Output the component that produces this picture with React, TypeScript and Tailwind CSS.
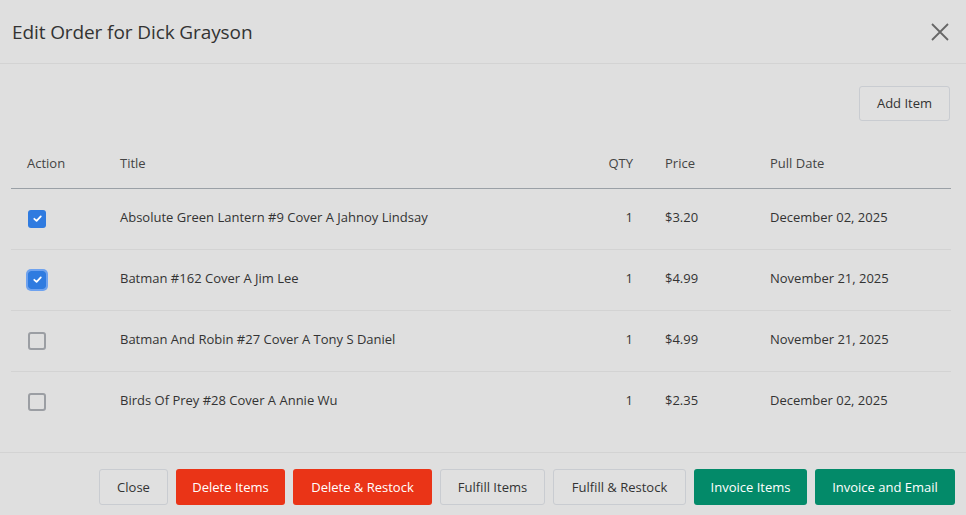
import React, { useState } from 'react';

const items = [
  { title: 'Absolute Green Lantern #9 Cover A Jahnoy Lindsay', qty: 1, price: '$3.20', date: 'December 02, 2025', checked: true },
  { title: 'Batman #162 Cover A Jim Lee', qty: 1, price: '$4.99', date: 'November 21, 2025', checked: true, focus: true },
  { title: 'Batman And Robin #27 Cover A Tony S Daniel', qty: 1, price: '$4.99', date: 'November 21, 2025', checked: false },
  { title: 'Birds Of Prey #28 Cover A Annie Wu', qty: 1, price: '$2.35', date: 'December 02, 2025', checked: false },
];

function Check({ checked, focus }: { checked: boolean; focus?: boolean }) {
  return (
    <div className={`flex items-center justify-center rounded-[3px] ${focus ? 'ring-2 ring-[#6ea2ef]' : ''}`}>
      {checked ? (
        <div className="w-[18px] h-[18px] rounded-[3px] bg-[#2f7be0] flex items-center justify-center">
          <svg width="11" height="11" viewBox="0 0 12 12" fill="none">
            <path d="M2.5 6.3 L5 8.6 L9.6 3.6" stroke="white" strokeWidth="1.9" strokeLinecap="round" strokeLinejoin="round" />
          </svg>
        </div>
      ) : (
        <div className="w-[18px] h-[18px] rounded-[3px] border-2 border-[#9b9ea3]" />
      )}
    </div>
  );
}

export default function App() {
  const [rows] = useState(items);

  return (
    <div className="w-[966px] h-[515px] bg-[#dfdfdf] text-[#333] overflow-hidden" style={{ fontFamily: '"Open Sans", "Noto Sans", sans-serif' }}>
      <div className="h-[64px] flex items-center justify-between pl-[12px] pr-[16px] border-b border-[#d3d3d3]">
        <h2 className="text-[19px] text-[#333] tracking-[-0.1px] pt-[1px]">Edit Order for Dick Grayson</h2>
        <svg width="20" height="20" viewBox="0 0 20 20" className="text-[#666]">
          <path d="M2 2 L18 18 M18 2 L2 18" stroke="currentColor" strokeWidth="1.8" />
        </svg>
      </div>

      <div className="px-[11px] pt-[22px]">
        <div className="flex justify-end pr-[5px]">
          <button className="h-[35px] w-[91px] text-[13px] text-[#333] border border-[#c9ccd1] rounded-[3px] bg-[#e0e0e0]">Add Item</button>
        </div>

        <table className="w-[940px] text-[13px] border-collapse">
          <thead>
            <tr className="h-[67px] border-b border-[#9aa0a6] text-[#444]">
              <th className="font-normal text-left align-bottom pb-[14px] pl-[16px] w-[109px]">Action</th>
              <th className="font-normal text-left align-bottom pb-[14px]">Title</th>
              <th className="font-normal text-right align-bottom pb-[14px] w-[60px]">QTY</th>
              <th className="font-normal text-left align-bottom pb-[14px] pl-[32px] w-[137px]">Price</th>
              <th className="font-normal text-left align-bottom pb-[14px] w-[181px]">Pull Date</th>
            </tr>
          </thead>
          <tbody>
            {rows.map((r, i) => (
              <tr key={i} className={`h-[61px] ${i < rows.length - 1 ? 'border-b border-[#d3d3d3]' : ''}`}>
                <td className="pl-[17px]"><div className="w-[18px]"><Check checked={r.checked} focus={r.focus} /></div></td>
                <td className="text-[#333] pb-[2px]">{r.title}</td>
                <td className="text-right pb-[2px]">{r.qty}</td>
                <td className="pl-[32px] pb-[2px]">{r.price}</td>
                <td className="pb-[2px]">{r.date}</td>
              </tr>
            ))}
          </tbody>
        </table>
      </div>

      <div className="mt-[20px] border-t border-[#d3d3d3] flex justify-end gap-[8px] pr-[11px] pt-[16px] text-[13px]">
        <button className="h-[36px] w-[69px] pt-[2px] border border-[#c9ccd1] rounded-[3px] bg-[#e0e0e0] text-[#333]">Close</button>
        <button className="h-[36px] w-[109px] pt-[2px] rounded-[3px] bg-[#ea3417] text-white">Delete Items</button>
        <button className="h-[36px] w-[139px] pt-[2px] rounded-[3px] bg-[#ea3417] text-white">Delete &amp; Restock</button>
        <button className="h-[36px] w-[105px] pt-[2px] border border-[#c9ccd1] rounded-[3px] bg-[#e0e0e0] text-[#333]">Fulfill Items</button>
        <button className="h-[36px] w-[133px] pt-[2px] border border-[#c9ccd1] rounded-[3px] bg-[#e0e0e0] text-[#333]">Fulfill &amp; Restock</button>
        <button className="h-[36px] w-[113px] pt-[2px] rounded-[3px] bg-[#038a69] text-white">Invoice Items</button>
        <button className="h-[36px] w-[140px] pt-[2px] rounded-[3px] bg-[#038a69] text-white">Invoice and Email</button>
      </div>
    </div>
  );
}
